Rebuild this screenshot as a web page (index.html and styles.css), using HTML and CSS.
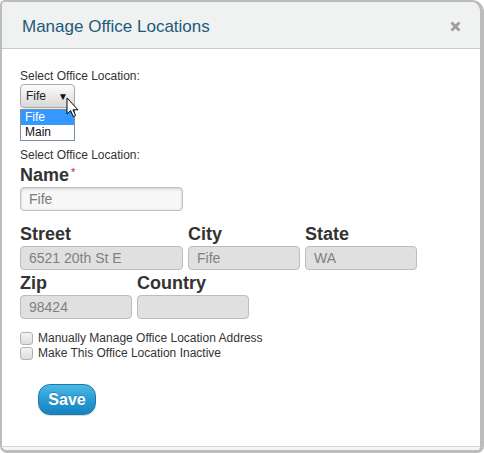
FILE: index.html
```html
<!DOCTYPE html>
<html>
<head>
<meta charset="utf-8">
<link rel="stylesheet" href="styles.css">
</head>
<body>
<div class="dialog">
  <div class="dlg-header">
    <span class="dlg-title">Manage Office Locations</span>
    <svg class="dlg-close" width="11" height="11" viewBox="0 0 11 11"><path d="M1.5 1.5 L9.5 9.5 M9.5 1.5 L1.5 9.5" stroke="#9c9c9c" stroke-width="2.8"/></svg>
  </div>
  <div class="dlg-body">
    <div class="small-label">Select Office Location:</div>
    <div class="select-wrap">
      <div class="select-box"><span>Fife</span><span class="select-arrow">&#9660;</span></div>
      <svg class="cursor" width="14" height="21" viewBox="0 0 14 21"><path d="M1 1 L1 17 L4.6 13.6 L7.3 19.6 L9.6 18.6 L7 12.8 L12 12.8 Z" fill="#fff" stroke="#000" stroke-width="1" stroke-linejoin="miter"/></svg>
    </div>
    <div class="listbox">
      <div class="opt opt-sel">Fife</div>
      <div class="opt">Main</div>
    </div>
    <div class="small-label label2">Select Office Location:</div>
    <div class="field-label name-label">Name<span class="req">*</span></div>
    <div class="input input-name">Fife</div>
    <div class="row row-street">
      <div class="field w163">
        <div class="field-label">Street</div>
        <div class="input disabled">6521 20th St E</div>
      </div>
      <div class="field w112">
        <div class="field-label">City</div>
        <div class="input disabled">Fife</div>
      </div>
      <div class="field w112">
        <div class="field-label">State</div>
        <div class="input disabled">WA</div>
      </div>
    </div>
    <div class="row row-zip">
      <div class="field w112">
        <div class="field-label">Zip</div>
        <div class="input disabled">98424</div>
      </div>
      <div class="field w112">
        <div class="field-label">Country</div>
        <div class="input disabled"></div>
      </div>
    </div>
    <div class="checks">
      <div class="check"><span class="cbox"></span>Manually Manage Office Location Address</div>
      <div class="check"><span class="cbox"></span>Make This Office Location Inactive</div>
    </div>
    <div class="btn-save">Save</div>
  </div>
  <div class="dlg-footer"></div>
</div>
</body>
</html>
```
FILE: styles.css
```css
html, body {
  margin: 0;
  padding: 0;
  background: #ffffff;
}
body {
  font-family: "Liberation Sans", Arial, sans-serif;
  color: #333;
}
.dialog {
  width: 484px;
  height: 453px;
  box-sizing: border-box;
  border-style: solid;
  border-color: #bcbcbc;
  border-width: 2px 4px 3px 2px;
  border-radius: 5px 12px 7px 7px;
  overflow: hidden;
  display: flex;
  flex-direction: column;
  background: #f3f4f4;
}
.dlg-header {
  flex: none;
  background: #f0f1f1;
  border-bottom: 1px solid #c9c9c9;
  display: flex;
  align-items: center;
  justify-content: space-between;
  padding: 3px 19px 0 20px;
  box-sizing: border-box;
  height: 47px;
}
.dlg-title {
  font-size: 17px;
  color: #1e5a7a;
}
.dlg-close {
  display: block;
}
.dlg-body {
  background: #fff;
  padding: 20px 18px 31px 18px;
  border-bottom: 1px solid #d6d6d6;
  flex: none;
}
.dlg-footer {
  flex: 1;
  background: #f3f4f4;
}
.small-label {
  font-size: 12px;
  line-height: 14px;
  color: #333;
}
.label2 {
  margin-top: 7px;
}
.select-wrap {
  position: relative;
  margin-top: 1px;
  width: 55px;
}
.select-box {
  width: 55px;
  height: 24px;
  box-sizing: border-box;
  border: 1px solid #a9a9a9;
  border-radius: 4px;
  background: linear-gradient(#fdfdfd, #e6e6e6 60%, #d9d9d9);
  display: flex;
  align-items: center;
  justify-content: space-between;
  padding: 0 6px 0 5px;
  font-size: 12px;
  color: #222;
  box-shadow: 0 1px 1px rgba(0,0,0,0.08);
}
.select-arrow {
  font-size: 10px;
  color: #111;
}
.cursor {
  position: absolute;
  left: 46px;
  top: 13px;
}
.listbox {
  margin-top: 1px;
  width: 55px;
  box-sizing: border-box;
  border: 1px solid #7f8fa8;
  background: #fff;
}
.opt {
  height: 15px;
  line-height: 15px;
  font-size: 12px;
  padding-left: 4px;
  color: #111;
}
.opt-sel {
  background: #3399ff;
  color: #fff;
}
.field-label {
  font-size: 18px;
  font-weight: bold;
  line-height: 20px;
  color: #333;
  white-space: nowrap;
}
.name-label {
  margin-top: 3px;
}
.req {
  color: #d0203a;
  font-size: 11px;
  font-weight: normal;
  vertical-align: top;
  position: relative;
  top: -3px;
  margin-left: 2px;
}
.input {
  margin-top: 2px;
  height: 24px;
  box-sizing: border-box;
  border: 1px solid #bfbfbf;
  border-radius: 4px;
  padding-left: 8px;
  font-size: 14px;
  line-height: 22px;
  color: #7a7a7a;
  white-space: nowrap;
}
.input-name {
  width: 163px;
  background: #f7f7f7;
  box-shadow: inset 0 1px 3px rgba(0,0,0,0.18);
}
.disabled {
  background: #e0e0e0;
  border-color: #bdbdbd;
  color: #808080;
}
.row {
  display: flex;
  gap: 5px;
}
.row-street {
  margin-top: 13px;
}
.row-zip {
  margin-top: 3px;
}
.w163 { width: 163px; }
.w112 { width: 112px; }
.checks {
  margin-top: 12px;
}
.check {
  display: flex;
  align-items: center;
  font-size: 12px;
  line-height: 15px;
  height: 15px;
  color: #333;
}
.cbox {
  width: 11px;
  height: 11px;
  border: 1px solid #b2b2b2;
  border-radius: 3px;
  background: linear-gradient(#f4f4f4, #dcdcdc);
  margin-right: 5px;
  flex: none;
}
.btn-save {
  margin: 23px 0 0 18px;
  width: 58px;
  height: 31px;
  box-sizing: border-box;
  border: 1px solid #1b78a8;
  border-radius: 12px;
  background: linear-gradient(#4cb8e6, #2a9bd4 50%, #1583c2);
  color: #fff;
  font-size: 16px;
  font-weight: bold;
  display: flex;
  align-items: center;
  justify-content: center;
  text-shadow: 0 -1px 0 rgba(0,0,0,0.2);
  box-shadow: 0 1px 1px rgba(0,0,0,0.15);
}
```
